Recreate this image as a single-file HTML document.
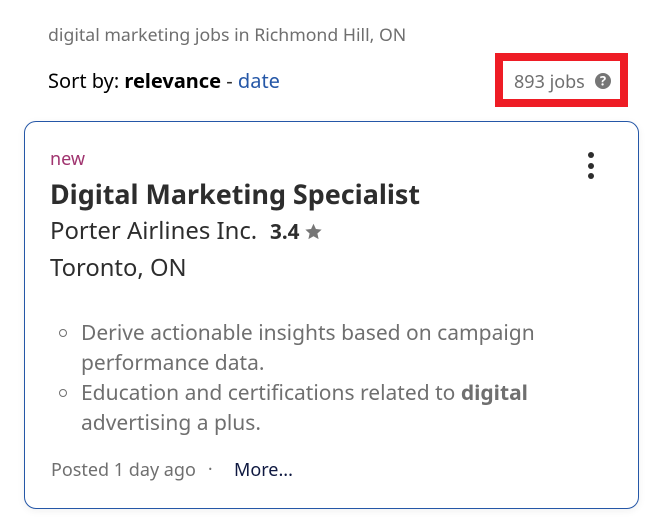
<!DOCTYPE html>
<html>
<head>
<meta charset="utf-8">
<style>
html,body{margin:0;padding:0;background:#fff;width:667px;height:524px;overflow:hidden}
body{position:relative;font-family:"Noto Sans","Liberation Sans",sans-serif}
.t{position:absolute;white-space:nowrap;line-height:1}
.box{position:absolute;left:495px;top:53px;width:133px;height:54px;box-sizing:border-box;border:8px solid #ee1c25}
.card{position:absolute;left:24px;top:121px;width:615px;height:388px;box-sizing:border-box;border:1px solid #2557a7;border-radius:12px;background:#fff;box-shadow:0 2px 8px rgba(0,0,0,.06)}
.dot{position:absolute;left:588px;width:6px;height:6px;border-radius:50%;background:#2d2d2d}
.b{position:absolute;left:59px;width:8px;height:8px;box-sizing:border-box;border:1px solid #6f6f6f;border-radius:50%}
.g{color:#6f6f6f}
</style>
</head>
<body>
<div class="t g" style="left:48px;top:26.5px;font-size:17.7px">digital marketing jobs in Richmond Hill, ON</div>
<div class="t" style="left:48px;top:71px;font-size:20px;color:#000">Sort by: <b>relevance</b> <span style="color:#2d2d2d">-</span> <span style="color:#2557a7">date</span></div>
<div class="box"></div>
<div class="t g" style="left:514px;top:73px;font-size:18px">893 jobs</div>
<svg style="position:absolute;left:595px;top:73px" width="16" height="16" viewBox="0 0 16 16"><circle cx="8" cy="8" r="8" fill="#767676"/><text x="8" y="12.7" text-anchor="middle" font-family="'Noto Sans','Liberation Sans',sans-serif" font-weight="700" font-size="13" fill="#fff">?</text></svg>
<div class="card"></div>
<div class="dot" style="top:152px"></div>
<div class="dot" style="top:163px"></div>
<div class="dot" style="top:173px"></div>
<div class="t" style="left:50px;top:150px;font-size:18px;color:#a0346f">new</div>
<div class="t" style="left:50px;top:181px;font-size:26.9px;font-weight:700;color:#2d2d2d">Digital Marketing Specialist</div>
<div class="t" style="left:50px;top:219px;font-size:23.9px;color:#2d2d2d">Porter Airlines Inc.</div>
<div class="t" style="left:270px;top:222px;font-size:20.7px;font-weight:700;color:#2d2d2d">3.4</div>
<svg style="position:absolute;left:305px;top:223px" width="17" height="17" viewBox="0 0 24 24"><path d="M12 1l3.4 7.4 8.1.9-6 5.5 1.7 8L12 18.7 4.8 22.8l1.7-8-6-5.5 8.1-.9z" fill="#767676"/></svg>
<div class="t" style="left:50px;top:255.5px;font-size:23.8px;color:#2d2d2d">Toronto, ON</div>
<div class="b" style="top:329px"></div>
<div class="t g" style="left:81px;top:323px;font-size:21px">Derive actionable insights based on campaign</div>
<div class="t g" style="left:81px;top:353px;font-size:21px">performance data.</div>
<div class="b" style="top:389px"></div>
<div class="t g" style="left:81px;top:383px;font-size:21px">Education and certifications related to <b>digital</b></div>
<div class="t g" style="left:81px;top:413px;font-size:21px">advertising a plus.</div>
<div class="t g" style="left:51px;top:461px;font-size:18px">Posted 1 day ago</div>
<div class="t g" style="left:208px;top:460px;font-size:17px">·</div>
<div class="t" style="left:234px;top:460.5px;font-size:18px;color:#0f1941">More...</div>
</body>
</html>
